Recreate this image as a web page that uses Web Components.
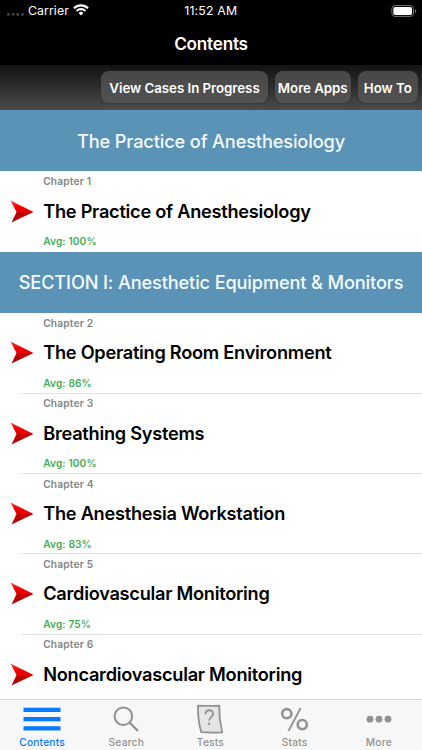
<!DOCTYPE html>
<html lang="en"><head><meta charset="utf-8"><title>Contents</title>
<style>
html,body{margin:0;height:100%;overflow:hidden;background:#fff}
body{font-family:Inter,"Liberation Sans",sans-serif;-webkit-font-smoothing:antialiased}
</style></head><body>
<app-screen></app-screen>
<script>
const define=(name,html)=>customElements.define(name,class extends HTMLElement{
  constructor(){super();const t=document.createElement('template');
    t.innerHTML=html;
    this.attachShadow({mode:'open'}).append(t.content.cloneNode(true));}
});
define('status-bar',`<style>
:host{display:grid;grid-template-columns:1fr auto 1fr;align-items:center;height:21px;padding:0 5.5px 0 5px;color:#fff;font-size:12.3px;letter-spacing:.08px;line-height:20px}
.l{display:flex;align-items:center;padding-left:1.5px}.r{display:flex;justify-content:flex-end}
.time{letter-spacing:.18px}
.dots{margin-right:4.5px;margin-top:7px}.wifi{margin-left:4.5px;margin-top:-1px}
</style>
<div class="l"><svg class="dots" width="17" height="3" fill="#464646"><rect width="2.7" height="2.7" rx="1"/><rect x="4.7" width="2.7" height="2.7" rx="1"/><rect x="9.4" width="2.7" height="2.7" rx="1"/><rect x="14.1" width="2.7" height="2.7" rx="1"/></svg><span>Carrier</span>
<svg class="wifi" width="16" height="12" viewBox="0 0 16 12" fill="none" stroke="#fff" stroke-width="2.1"><path d="M1 4.2a10 10 0 0 1 14 0M3.6 6.9a6.3 6.3 0 0 1 8.8 0"/><path d="M8 11.4 5.6 9a3.5 3.5 0 0 1 4.8 0z" fill="#fff" stroke="none"/></svg></div>
<span class="time">11:52 AM</span>
<div class="r"><svg width="26" height="12" viewBox="0 0 26 12"><rect x=".9" y=".6" width="21.6" height="10.8" rx="3" fill="none" stroke="#777"/><rect x="2.4" y="2.1" width="18.6" height="7.8" rx="1.6" fill="#fff"/><path d="M24 4v4q1.3-.6 1.3-2T24 4" fill="#777"/></svg></div>`);
define('nav-title',`<style>:host{display:flex;justify-content:center;align-items:center;height:44px;color:#fff;font-size:17.2px;font-weight:600;letter-spacing:-.25px}</style><slot></slot>`);
define('tool-bar',`<style>:host{display:flex;justify-content:flex-end;align-items:flex-start;gap:7px;box-sizing:border-box;height:45px;padding:6px 4px 0 0;background:linear-gradient(#131313,#4b4b4b)}</style><slot></slot>`);
define('tool-button',`<style>:host{display:flex;align-items:center;justify-content:center;box-sizing:border-box;height:32px;width:var(--w);padding-top:1.5px;border-radius:8px;background:linear-gradient(#474747,#525252);box-shadow:0 0 2px #222;color:#fff;font-size:13.3px;font-weight:600;letter-spacing:-.04px;white-space:nowrap}</style><slot></slot>`);
define('section-header',`<style>:host{display:flex;align-items:center;justify-content:center;height:61.2px;background:#5b93b6;color:#f4fbff;font-size:18.2px;font-weight:500;letter-spacing:-.14px;white-space:nowrap}</style><slot></slot>`);
define('chapter-row',`<style>
:host{display:grid;grid-template-columns:34px 1fr;column-gap:9.2px;height:80.4px;position:relative;box-sizing:border-box}
.arrow{align-self:start;margin:27.4px 0 0 9.6px}
.c{display:flex;flex-direction:column;white-space:nowrap}
.ch{font-size:10.2px;font-weight:600;color:#858585;letter-spacing:.18px;line-height:14px;margin-top:3.1px}
.t{font-size:18.2px;font-weight:600;color:#000;letter-spacing:-.26px;line-height:24px;margin-top:10.4px}
.a{font-size:10.2px;font-weight:600;color:#43ad55;letter-spacing:.1px;line-height:14px;margin-top:11.5px}
:host([line])::after{content:"";position:absolute;left:21px;right:0;bottom:-.5px;height:1px;background:#e2e2e3}
</style>
<svg class="arrow" width="24" height="24" viewBox="0 0 24 24"><defs><linearGradient id="g" x2="0" y2="1"><stop stop-color="#f04a40"/><stop offset=".3" stop-color="#f00000"/><stop offset=".5" stop-color="#e80000"/><stop offset=".56" stop-color="#c40000"/><stop offset="1" stop-color="#a60c0c"/></linearGradient></defs><path d="M.5 1.5 23.5 13 1.5 23.5 6.5 13z" fill="url(#g)"/></svg>
<div class="c"><span class="ch"><slot name="chapter"></slot></span><span class="t"><slot></slot></span><span class="a"><slot name="avg"></slot></span></div>`);
define('tab-bar',`<style>:host{display:grid;grid-template-columns:repeat(5,84.2px);height:51px;box-sizing:border-box;border-top:1px solid #dadada;background:#f7f7f7;position:absolute;left:0;right:0;bottom:0}</style><slot></slot>`);
define('tab-item',`<style>:host{display:flex;flex-direction:column;align-items:center;color:#929292;font-size:10.2px;font-weight:500;letter-spacing:.2px}
.i{height:35.2px;display:flex}.t{line-height:14px}</style><div class="i"><slot name="icon"></slot></div><span class="t"><slot></slot></span>`);
const row=(n,t,a,line)=>`<chapter-row${line?' line':''}><span slot="chapter">Chapter ${n}</span>${t}<span slot="avg">Avg: ${a}%</span></chapter-row>`;
define('app-screen',`<style>
:host{display:block;position:relative;width:422px;height:750px;overflow:hidden;background:#fff}
.top{background:#000}
</style>
<div class="top"><status-bar></status-bar><nav-title>Contents</nav-title></div>
<tool-bar><tool-button style="--w:167px">View Cases In Progress</tool-button><tool-button style="--w:75.5px">More Apps</tool-button><tool-button style="--w:60.5px">How To</tool-button></tool-bar>
<section-header>The Practice of Anesthesiology</section-header>
${row(1,'The Practice of Anesthesiology',100)}
<section-header>SECTION I: Anesthetic Equipment &amp; Monitors</section-header>
${row(2,'The Operating Room Environment',86,1)}${row(3,'Breathing Systems',100,1)}${row(4,'The Anesthesia Workstation',83,1)}${row(5,'Cardiovascular Monitoring',75,1)}${row(6,'Noncardiovascular Monitoring',80)}
<tab-bar>
<tab-item style="color:#087aff"><svg slot="icon" width="38" height="36" fill="#087aff"><rect x=".5" y="7.7" width="37" height="4.3"/><rect x=".5" y="17" width="37" height="4.3"/><rect x=".5" y="26.2" width="37" height="4.3"/></svg>Contents</tab-item>
<tab-item><svg slot="icon" width="28" height="36" fill="none" stroke="#929292"><circle cx="11.4" cy="16.3" r="8.8" stroke-width="2"/><path d="m17.6 22.5 8.3 8.5" stroke-width="2.4"/></svg>Search</tab-item>
<tab-item><svg slot="icon" width="28" height="36" fill="none" stroke="#929292" stroke-width="1.8" stroke-linejoin="round"><path d="M2 5.6Q13 6 23.2 5.6Q23 19 26.2 32.4Q15 33 5.3 32.2Q1.6 20 2 5.6z" fill="#e5e5e5"/><path d="M9.5 14.3c0-5.3 7.6-5.3 7.6-.5 0 3.4-3.9 3.3-3.9 6.6M13.2 22.6v2.6"/></svg>Tests</tab-item>
<tab-item><svg slot="icon" width="28" height="36" fill="none" stroke="#929292" stroke-width="2.6"><circle cx="5.8" cy="13.7" r="4.6"/><circle cx="21.3" cy="24.6" r="4.6"/><path d="M19.7 8 7.5 31" stroke-width="1.8"/></svg>Stats</tab-item>
<tab-item><svg slot="icon" width="26" height="36" fill="#929292"><circle cx="4" cy="19.2" r="3.4"/><circle cx="13" cy="19.2" r="3.4"/><circle cx="22" cy="19.2" r="3.4"/></svg>More</tab-item>
</tab-bar>`);
</script></body></html>
